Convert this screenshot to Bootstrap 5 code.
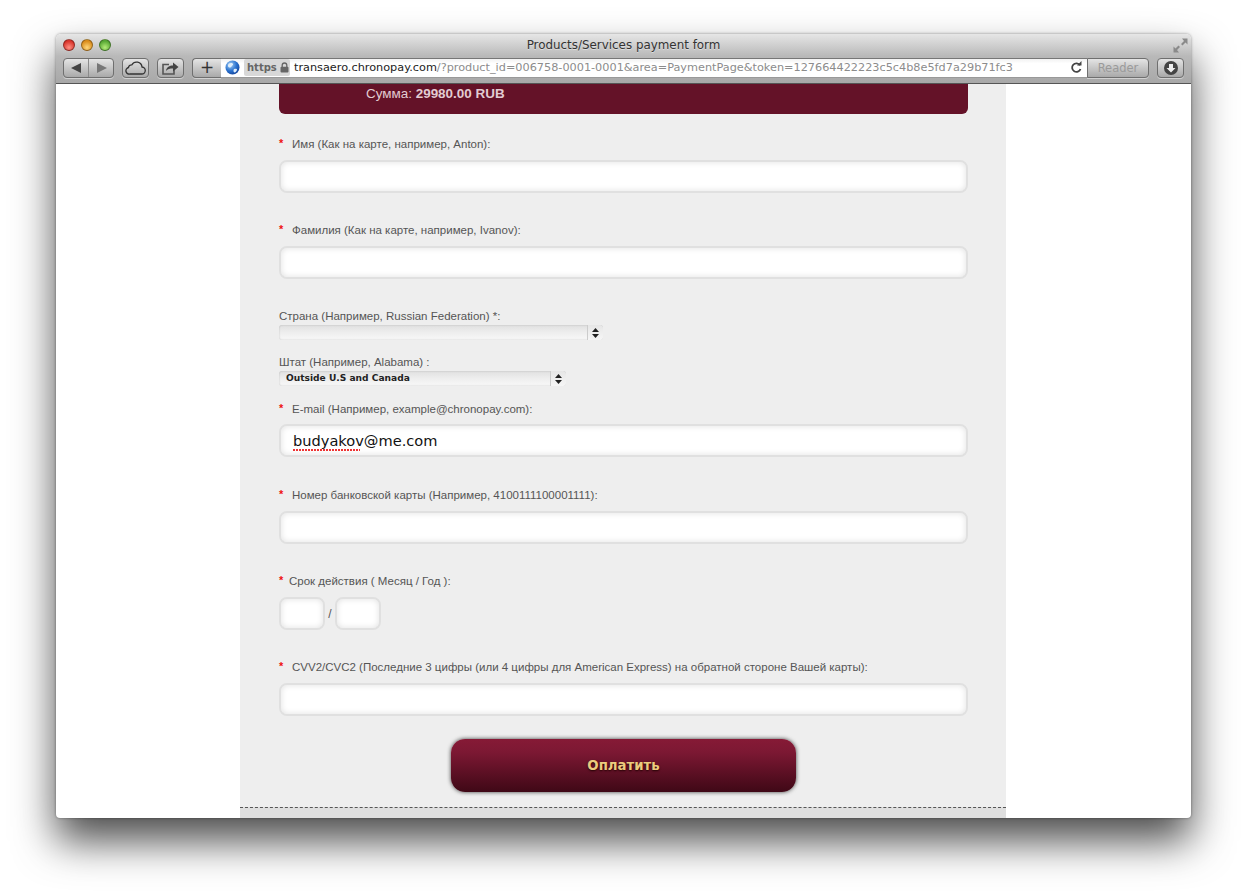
<!DOCTYPE html>
<html lang="ru">
<head>
  <meta charset="UTF-8" />
  <title>Products/Services payment form</title>
  <link href="https://cdn.jsdelivr.net/npm/bootstrap@5.3.3/dist/css/bootstrap.min.css" rel="stylesheet">
  <style>
    html, body { height: 100%; }
    body { background: #fff; overflow: hidden; padding: 34px 56px 0; font-family: "Liberation Sans", Arial, sans-serif; }
    .mac-window { width: 1135px; height: 784px; border-radius: 5px 5px 4px 4px; box-shadow: 0 23px 42px rgba(0,0,0,.7), 0 0 3px rgba(0,0,0,.4); background: #fff; overflow: hidden; }
    .mac-chrome { height: 50px; background: linear-gradient(#e6e6e6, #b9b9b9 45%, #a8a8a8); border-bottom: 1px solid #555; flex: none; }
    .title-row { height: 23px; padding: 0 3px 1px; }
    .light { width: 12px; height: 12px; border-radius: 50%; border: 1px solid rgba(0,0,0,.35); }
    .light-red { margin-left: 4px; background: radial-gradient(circle at 50% 75%, #ff8f83, #d8352c 70%); }
    .light-yellow { background: radial-gradient(circle at 50% 75%, #ffd77a, #da8d1d 70%); }
    .light-green { background: radial-gradient(circle at 50% 75%, #b4ec78, #58a834 70%); }
    .lights { gap: 6px; flex: 1 1 0; }
    .title-end { flex: 1 1 0; }
    .win-title { font: 11.9px "DejaVu Sans", sans-serif; color: #333; text-shadow: 0 1px 0 #ddd; }
    .tool-row { height: 21px; padding: 0 7px; }
    .tool-btn { height: 20px; border: 1px solid #6f6f6f; border-radius: 4px; background: linear-gradient(#e4e4e4, #a9a9a9); box-shadow: 0 1px 0 rgba(255,255,255,.45); color: #444; flex: none; }
    .btn-nav { width: 51px; }
    .btn-nav span { flex: 1; height: 100%; }
    .btn-nav span + span { border-left: 1px solid #8b8b8b; }
    .btn-sq { width: 27px; margin-left: 8px; }
    .btn-plus { width: 29px; margin-left: 8px; border-radius: 4px 0 0 4px; border-right: 0; font: 17px/1 "DejaVu Sans", sans-serif; color: #333; }
    .url-box { width: 866px; height: 20px; background: linear-gradient(#f2f2f2, #fff 25%); border-top: 1px solid #777; border-bottom: 1px solid #999; padding: 0 4px; flex: none; font: 11.27px "DejaVu Sans", sans-serif; white-space: nowrap; overflow: hidden; }
    .https-chip { width: 46px; height: 17px; margin: 0 4px 0 4px; padding-left: 3px; background: #d8d8d8; border-radius: 2px; color: #666; font-weight: 700; font-size: 10px; flex: none; gap: 3px; }
    .url-host { color: #222; }
    .url-rest { color: #8c8c8c; }
    .reload-icon { margin-right: 1px; }
    .btn-reader { width: 62px; border-radius: 0 4px 4px 0; color: #9a9a9a; font: 11.5px "DejaVu Sans", sans-serif; }
    .mac-content { height: 734px; }
    .form-column { width: 766px; margin-left: 184px; height: 100%; background: #eee; padding: 0 38px 0 39px; }
    .sum-strip { height: 30px; background: #641228; border-radius: 0 0 6px 6px; color: #e2ccd2; font-size: 13.45px; padding: 0 0 0 87px; line-height: 20.5px; }
    .field-label { display: flex; color: #555; font-size: 11.5px; line-height: 14px; height: 14px; margin: 0; }
    .req { color: #e11; width: 13px; flex: none; font-weight: 700; margin-top: -1px; font-size: 11px; }
    .req-short { width: 10px; }
    .pay-input.form-control { display: block; height: 33px; padding: 0 12px; background: #fff; border: 2px solid #e0e0e0; border-radius: 8px; box-shadow: inset 0 0 6px rgba(0,0,0,.12); font: 14.6px "DejaVu Sans", sans-serif; color: #111; min-height: 0; }
    .field-block { margin-bottom: 30px; }
    .field-first { margin-top: 23px; }
    .field-mail { margin-top: 16px; margin-bottom: 31px; }
    .field-label + .pay-input, .field-label + .date-row { margin-top: 9px; }
    .field-label + .mail-wrap { margin-top: 8px; }
    .short-input.form-control { width: 46px; flex: none; }
    .date-row { color: #555; font-size: 12px; }
    .date-sep { width: 10px; text-align: center; }
    .plain-select { display: flex; height: 15px; margin-top: 2px; border-radius: 3px; overflow: hidden; background: linear-gradient(#e0e0e0, #eee 50%, #f8f8f8); box-shadow: inset 0 0 2px rgba(0,0,0,.2); }
    .plain-select select { flex: 1; min-width: 0; height: 15px; appearance: none; border: 0; background: transparent; padding: 0 7px; font: 700 9.1px/15px "DejaVu Sans", sans-serif; color: #222; outline: 0; }
    .sel-arrows { width: 16px; flex: none; border-left: 1px solid #ccc; background: linear-gradient(#e6e6e6, #f6f6f6); border-radius: 0 3px 3px 0; }
    .sel-country { width: 324px; }
    .sel-state { width: 287px; }
    .label-state { margin-top: 15px; }
    .spell-mark { position: absolute; left: 14px; top: 25px; width: 67px; height: 2px; background: radial-gradient(circle at 1px 1px, #e33 .8px, transparent 1px) 0 0 / 3px 2px repeat-x; }
    .pay-btn { display: block; width: 345px; height: 53px; margin: 23px 0 0 172px; background: linear-gradient(#861a36, #7c1833 25%, #3f0816); border: 0; border-radius: 14px; box-shadow: 0 0 4px rgba(0,0,0,.75); color: #eccb7e; font: 700 13.3px "DejaVu Sans", sans-serif; text-shadow: 0 1px 2px #200; }
    .dash-foot { margin: 15px -38px 0 -39px; height: 11px; background: #dedede; border-top: 1px dashed #555; }
  </style>
</head>
<body>
  <div class="mac-window d-flex flex-column">
    <div class="mac-chrome">
      <div class="title-row d-flex align-items-center">
        <div class="lights d-flex"><span class="light light-red"></span><span class="light light-yellow"></span><span class="light light-green"></span></div>
        <div class="win-title text-center">Products/Services payment form</div>
        <div class="title-end d-flex justify-content-end">
          <svg width="15" height="15" viewBox="0 0 15 15" fill="#8a8a8a"><path d="M14.500.5v6l-2-2-3 3-1.500-1.500 3-3-2-2.500zM.5 14.500v-6l2 2 3-3 1.500 1.500-3 3 2 2.500z"/></svg>
        </div>
      </div>
      <div class="tool-row d-flex align-items-center">
        <div class="tool-btn btn-nav d-flex">
          <span class="d-flex align-items-center justify-content-center"><svg width="11" height="10" viewBox="0 0 11 10" fill="#444"><path d="M0 5l10-5v10z"/></svg></span>
          <span class="d-flex align-items-center justify-content-center"><svg width="11" height="10" viewBox="0 0 11 10" fill="#777"><path d="M11 5l-10-5v10z"/></svg></span>
        </div>
        <div class="tool-btn btn-sq d-flex align-items-center justify-content-center">
          <svg width="21" height="14" viewBox="0 0 21 14" fill="none" stroke="#333" stroke-width="1.300"><path d="M5 13h11.500a3.500 3.500 0 0 0 .5-7 5.500 5.500 0 0 0-10.200-2.200A3 3 0 0 0 3.500 6.500 3.300 3.300 0 0 0 5 13z"/></svg>
        </div>
        <div class="tool-btn btn-sq d-flex align-items-center justify-content-center">
          <svg width="17" height="14" viewBox="0 0 17 14"><path d="M7 3.500H1V13h11V9" fill="none" stroke="#555" stroke-width="1.600"/><path d="M4 10c.5-4 3.500-5.500 7-5.500V1.500l5.500 4.500L11 10.500V7.500C8 7.500 5.500 8 4 10z" fill="#444"/></svg>
        </div>
        <div class="tool-btn btn-plus d-flex align-items-center justify-content-center">+</div>
        <div class="url-box d-flex align-items-center">
          <svg width="15" height="15" viewBox="0 0 15 15"><defs><radialGradient id="globeFill" cx=".35" cy=".3" r=".8"><stop offset="0" stop-color="#a6d0f5"/><stop offset=".55" stop-color="#2a72cf"/><stop offset="1" stop-color="#123f96"/></radialGradient></defs><circle cx="7.500" cy="7.500" r="7" fill="url(#globeFill)"/><path d="M4 3.500c2-1 3.500-.5 4 .5s-1 1.500-1.500 2.500S4.500 8 3.500 7 3 4.500 4 3.500zM9 9c1.500-.5 3-.5 3 .5s-1.500 3-2.500 3S8 10 9 9z" fill="#dfeefb"/></svg>
          <span class="https-chip d-flex align-items-center">https
            <svg width="9" height="11" viewBox="0 0 9 11"><path d="M2.200 5V3.300a2.300 2.300 0 0 1 4.600 0V5" fill="none" stroke="#666" stroke-width="1.300"/><rect x=".5" y="4.800" width="8" height="5.700" rx="1" fill="#666"/></svg>
          </span>
          <span class="url-host">transaero.chronopay.com</span><span class="url-rest">/?product_id=006758-0001-0001&amp;area=PaymentPage&amp;token=127664422223c5c4b8e5fd7a29b71fc3</span>
          <svg width="12" height="13" viewBox="0 0 12 13" class="ms-auto reload-icon" fill="none"><path d="M10 4.200A4.300 4.300 0 1 0 10.500 8" stroke="#444" stroke-width="1.800"/><path d="M7 4.500h4.500V0z" fill="#444"/></svg>
        </div>
        <div class="tool-btn btn-reader d-flex align-items-center justify-content-center">Reader</div>
        <div class="tool-btn btn-sq d-flex align-items-center justify-content-center">
          <svg width="14" height="14" viewBox="0 0 14 14"><circle cx="7" cy="7" r="7" fill="#444"/><path d="M5 3h4v4h2.500L7 11.500 2.500 7H5z" fill="#eee"/></svg>
        </div>
      </div>
    </div>

    <div class="mac-content">
      <form class="form-column">
        <div class="sum-strip">Сумма: <b>29980.00 RUB</b></div>

        <div class="field-block field-first">
          <label class="field-label"><span class="req">*</span>Имя (Как на карте, например, Anton):</label>
          <input type="text" class="form-control pay-input">
        </div>
        <div class="field-block">
          <label class="field-label"><span class="req">*</span>Фамилия (Как на карте, например, Ivanov):</label>
          <input type="text" class="form-control pay-input">
        </div>

        <label class="field-label">Страна (Например, Russian Federation) *:</label>
        <div class="plain-select sel-country">
          <select aria-label="Страна"><option></option></select>
          <span class="sel-arrows d-flex align-items-center justify-content-center"><svg width="7" height="10" viewBox="0 0 7 10" fill="#222"><path d="M3.500 0L7 4H0zM3.500 10L0 6h7z"/></svg></span>
        </div>

        <label class="field-label label-state">Штат (Например, Alabama) :</label>
        <div class="plain-select sel-state">
          <select aria-label="Штат"><option>Outside U.S and Canada</option></select>
          <span class="sel-arrows d-flex align-items-center justify-content-center"><svg width="7" height="10" viewBox="0 0 7 10" fill="#222"><path d="M3.500 0L7 4H0zM3.500 10L0 6h7z"/></svg></span>
        </div>

        <div class="field-block field-mail">
          <label class="field-label"><span class="req">*</span>E-mail (Например, example@chronopay.com):</label>
          <div class="mail-wrap position-relative">
            <input type="text" class="form-control pay-input" value="budyakov@me.com" spellcheck="false">
            <span class="spell-mark"></span>
          </div>
        </div>
        <div class="field-block">
          <label class="field-label"><span class="req">*</span>Номер банковской карты (Например, 4100111100001111):</label>
          <input type="text" class="form-control pay-input">
        </div>
        <div class="field-block">
          <label class="field-label"><span class="req req-short">*</span>Срок действия ( Месяц / Год ):</label>
          <div class="date-row d-flex align-items-center">
            <input type="text" class="form-control pay-input short-input">
            <span class="date-sep">/</span>
            <input type="text" class="form-control pay-input short-input">
          </div>
        </div>
        <div>
          <label class="field-label"><span class="req">*</span>CVV2/CVC2 (Последние 3 цифры (или 4 цифры для American Express) на обратной стороне Вашей карты):</label>
          <input type="text" class="form-control pay-input">
        </div>

        <button type="button" class="pay-btn">Оплатить</button>
        <div class="dash-foot"></div>
      </form>
    </div>
  </div>
  <script src="https://cdn.jsdelivr.net/npm/bootstrap@5.3.3/dist/js/bootstrap.bundle.min.js"></script>
</body>
</html>
